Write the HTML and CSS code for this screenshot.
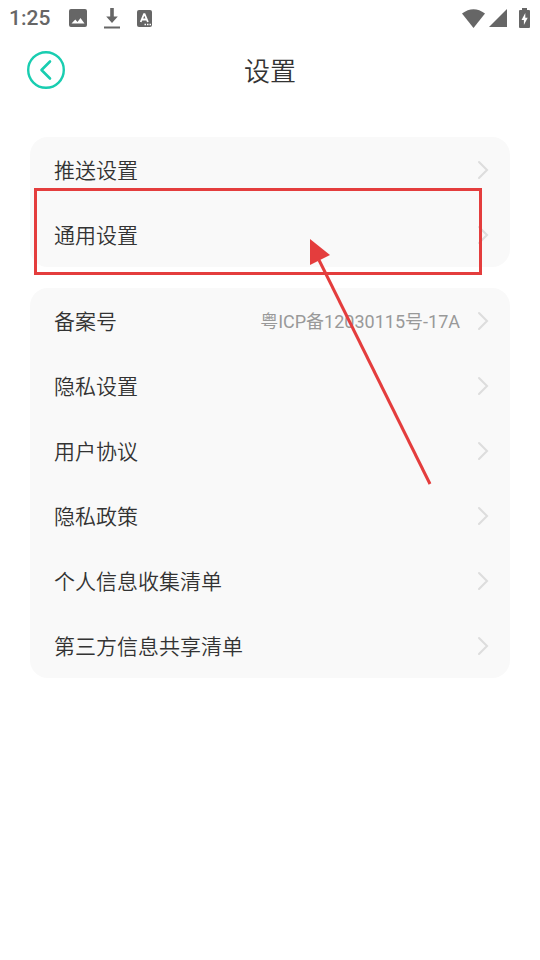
FILE: index.html
```html
<!DOCTYPE html>
<html lang="zh-CN">
<head>
    <meta charset="UTF-8">
    <meta name="viewport" content="width=device-width, initial-scale=1.0">
    <title>设置</title>
    <link rel="stylesheet" href="styles.css">
</head>
<body>
    <div class="status-bar">
        <span class="time">1:25</span>
        <div class="notifications">
            <svg width="18" height="18" viewBox="0 0 18 18"><path fill="#666" fill-rule="evenodd" d="M2 0h14q2 0 2 2v14q0 2-2 2H2q-2 0-2-2V2q0-2 2-2zM2.500 14.500h13l-4-5.500-3 4-2.200-2.500z"/></svg>
            <svg width="16" height="21" viewBox="0 0 16 21"><path fill="#666" d="M6.200 0h3.600v8.500h4L8 15 2.200 8.500h4zM0 18.500h16v2H0z"/></svg>
            <svg width="15" height="17" viewBox="0 0 15 17"><rect width="15" height="17" rx="2" fill="#666"/><path d="M3.700 12L7 4.200h.6L10.900 12M5 9.500h4.500" fill="none" stroke="#fff" stroke-width="1.800"/><path d="M7.500 14.500h1.500m1 0h1.500m1 0h1.500" stroke="#fff" stroke-width="1.300"/></svg>
        </div>
        <div class="signals">
            <svg width="23" height="19" viewBox="0 0 23 19"><path fill="#666" d="M0 4.500Q11.500-4 23 4.500L11.500 19z"/></svg>
            <svg width="18" height="18" viewBox="0 0 18 18"><path fill="#666" d="M18 0v18H0z"/></svg>
            <svg class="battery" width="11" height="20" viewBox="0 0 11 20"><path fill="#666" d="M3 0h5v2h2q1 0 1 1v16q0 1-1 1H1q-1 0-1-1V3q0-1 1-1h2z"/><path fill="#fff" d="M6.300 5L2.500 12h2.400v5l3.800-7.200H6.300z"/></svg>
        </div>
    </div>

    <header class="header">
        <button class="back" type="button" aria-label="返回">
            <svg width="38" height="38" viewBox="0 0 38 38" fill="none" stroke="#19cdb0">
                <circle cx="19" cy="19" r="17.800" stroke-width="2.400"/>
                <path d="M23 10.500L14.500 19l8.500 8.500" stroke-width="2.600" stroke-linecap="round" stroke-linejoin="round"/>
            </svg>
        </button>
        <h1>设置</h1>
    </header>

    <main class="content">
        <nav class="card">
            <a class="row" href="#push"><span class="label">推送设置</span><svg class="arrow" viewBox="0 0 12 20"><path d="M2 2l8 8-8 8"/></svg></a>
            <a class="row" href="#general"><span class="label">通用设置</span><svg class="arrow" viewBox="0 0 12 20"><path d="M2 2l8 8-8 8"/></svg></a>
        </nav>
        <nav class="card">
            <a class="row" href="#icp"><span class="label">备案号</span><span class="value">粤ICP备12030115号-17A</span><svg class="arrow" viewBox="0 0 12 20"><path d="M2 2l8 8-8 8"/></svg></a>
            <a class="row" href="#privacy"><span class="label">隐私设置</span><svg class="arrow" viewBox="0 0 12 20"><path d="M2 2l8 8-8 8"/></svg></a>
            <a class="row" href="#agreement"><span class="label">用户协议</span><svg class="arrow" viewBox="0 0 12 20"><path d="M2 2l8 8-8 8"/></svg></a>
            <a class="row" href="#policy"><span class="label">隐私政策</span><svg class="arrow" viewBox="0 0 12 20"><path d="M2 2l8 8-8 8"/></svg></a>
            <a class="row" href="#collect"><span class="label">个人信息收集清单</span><svg class="arrow" viewBox="0 0 12 20"><path d="M2 2l8 8-8 8"/></svg></a>
            <a class="row" href="#share"><span class="label">第三方信息共享清单</span><svg class="arrow" viewBox="0 0 12 20"><path d="M2 2l8 8-8 8"/></svg></a>
        </nav>

        <!-- 标注：红框和箭头 -->
        <div class="mark-box"></div>
        <svg class="mark-arrow" width="124" height="248" viewBox="0 0 124 248">
            <path d="M10 21l111 224" stroke="#e43d3d" stroke-width="3"/>
            <path d="M1 0l20 16-20 10z" fill="#e43d3d"/>
        </svg>
    </main>
</body>
</html>
```
FILE: styles.css
```css
* {
    box-sizing: border-box;
}
body {
    margin: 0;
    background-color: #fff;
    color: #333;
    font-family: Roboto, "Noto Sans CJK SC", sans-serif;
}
svg {
    display: block;
}

/* 状态栏 */
.status-bar {
    display: flex;
    align-items: center;
    height: 36px;
    padding: 0 10px 0 9px;
    color: #666;
}
.time {
    font-size: 21px;
    font-weight: 500;
}
.notifications {
    display: flex;
    align-items: center;
    gap: 17px;
    margin-left: 19px;
}
.signals {
    display: flex;
    align-items: center;
    gap: 4px;
    margin-left: auto;
}
.battery {
    margin-left: 8px;
}

/* 标题栏 */
.header {
    display: grid;
    grid-template-columns: 38px 1fr 38px;
    align-items: center;
    height: 67px;
    padding: 0 27px;
}
.header h1 {
    margin: 0;
    font-family: "Noto Sans CJK SC", sans-serif;
    font-size: 26px;
    font-weight: 350;
    line-height: 30px;
    text-align: center;
}
.back {
    padding: 0;
    border: none;
    background: none;
    cursor: pointer;
}

/* 设置列表 */
.content {
    position: relative;
    display: flex;
    flex-direction: column;
    gap: 21px;
    padding: 34px 30px;
}
.card {
    border-radius: 18px;
    background-color: #f9f9f9;
}
.row {
    display: flex;
    align-items: center;
    height: 65px;
    padding: 0 21px 0 24px;
    color: #333;
    text-decoration: none;
}
.label {
    flex: 1;
    padding-bottom: 2px;
    font-family: "Noto Sans CJK SC", sans-serif;
    font-size: 21px;
    font-weight: 350;
    line-height: 30px;
}
.value {
    margin-right: 17px;
    padding-bottom: 2px;
    color: #999;
    font-size: 18px;
}
.arrow {
    width: 12px;
    height: 20px;
    fill: none;
    stroke: #ddd;
    stroke-width: 2;
    stroke-linecap: round;
}

/* 标注 */
.mark-box {
    position: absolute;
    top: 85px;
    left: 34px;
    right: 58px;
    height: 87px;
    border: 3px solid #e43d3d;
    pointer-events: none;
}
.mark-arrow {
    position: absolute;
    top: 136px;
    right: 107px;
    pointer-events: none;
}
```
